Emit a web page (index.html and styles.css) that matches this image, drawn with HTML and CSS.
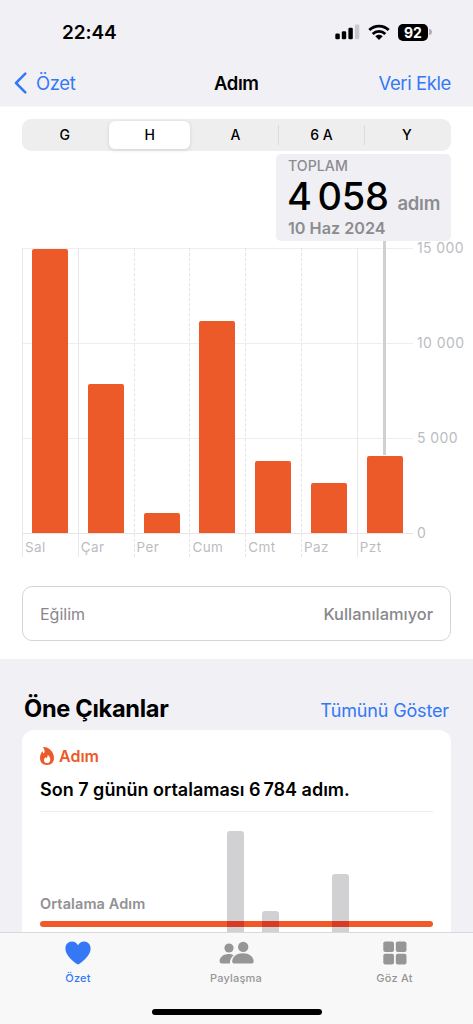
FILE: index.html
```html
<!DOCTYPE html>
<html lang="tr">
<head>
<meta charset="utf-8">
<meta name="viewport" content="width=device-width, initial-scale=1">
<title>Adım</title>
<link rel="stylesheet" href="styles.css">
</head>
<body>
<div class="screen">
  <header class="header">
    <div class="status">
      <span class="time">22:44</span>
      <div class="status-icons">
        <svg class="signal" width="25" height="16" viewBox="0 0 25 16"><rect x="0.3" y="9.6" width="4.5" height="5.7" rx="1.3"/><rect x="6.8" y="7.2" width="4.4" height="8.1" rx="1.3"/><rect x="13.4" y="3.7" width="4.4" height="11.6" rx="1.3"/><rect x="19.9" y="0.5" width="4.4" height="14.8" rx="1.3" fill="#c9c9cd"/></svg>
        <svg class="wifi" width="22" height="16" viewBox="0 0 22 16"><g fill="none" stroke="#000" stroke-width="2.8"><path d="M1.3 6.1C6.7.7 15.3.7 20.7 6.1"/><path d="M4.7 9.9C8.2 6.5 13.8 6.5 17.3 9.9"/></g><path d="M7.3 12.3C9.5 10.3 12.5 10.3 14.7 12.3L11 15.9Z"/></svg>
        <div class="battery"><span class="battery-level">92</span><span class="battery-tip"></span></div>
      </div>
    </div>
    <nav class="nav">
      <a class="back"><svg width="13" height="22" viewBox="0 0 13 22"><path d="M11.3 1.7 2 11l9.3 9.3" fill="none" stroke="#3478f6" stroke-width="2.5" stroke-linecap="round" stroke-linejoin="round"/></svg><span>Özet</span></a>
      <h1 class="title">Adım</h1>
      <a class="add"><span>Veri Ekle</span></a>
    </nav>
  </header>

  <main class="panel">
    <div class="segments">
      <span>G</span><span class="active">H</span><span>A</span><span class="divided">6 A</span><span class="divided">Y</span>
    </div>
    <section class="summary">
      <div class="callout">
        <span class="callout-kind">TOPLAM</span>
        <div class="callout-value"><span class="number">4 058</span><span class="unit">adım</span></div>
        <span class="callout-date">10 Haz 2024</span>
        <i class="callout-line"></i>
      </div>
    </section>
    <section class="chart">
      <div class="plot">
        <div class="day solid"><i style="height:284px"></i><span>Sal</span></div>
        <div class="day solid"><i style="height:149px"></i><span>Çar</span></div>
        <div class="day"><i style="height:20px"></i><span>Per</span></div>
        <div class="day"><i style="height:212px"></i><span>Cum</span></div>
        <div class="day"><i style="height:72px"></i><span>Cmt</span></div>
        <div class="day"><i style="height:50.5px"></i><span>Paz</span></div>
        <div class="day solid"><i style="height:77px"></i><span>Pzt</span></div>
      </div>
      <div class="scale"><span>15 000</span><span>10 000</span><span>5 000</span><span>0</span></div>
    </section>
    <div class="trend"><span class="trend-name">Eğilim</span><span class="trend-value">Kullanılamıyor</span></div>
  </main>

  <section class="highlights">
    <div class="section-head"><h2>Öne Çıkanlar</h2><a><span>Tümünü Göster</span></a></div>
    <article class="card">
      <div class="card-kind"><svg width="14" height="18" viewBox="0 0 14 18"><path fill="#eb5a28" fill-rule="evenodd" d="M3.7.1C8.7.1 14 5 14 11c0 4.300-2.800 7-7 7s-7-2.600-7-6.800C0 8.400.9 6.100 2 4.700c.3-.4.700-.2.800.2.200.8.500 1.300 1 1.700C5.100 5 4.600 2.400 3.300.8 3 .4 3.200.1 3.700.1ZM7.700 7.800c.2 1.800-.7 2.500-1.400 3.500-.5-.3-.7-.7-.8-1.200-.8.800-1.500 1.900-1.500 3.100 0 1.900 1.400 3 3.100 3s3.200-1.200 3.200-3.200c0-2.400-1.300-4.200-2.600-5.200Z"/></svg><span>Adım</span></div>
      <p class="card-text">Son 7 günün ortalaması 6&#8201;784 adım.</p>
      <div class="mini">
        <span class="mini-label">Ortalama Adım</span>
        <div class="mini-bars"><i style="height:102px"></i><i style="height:22px"></i><i class="empty"></i><i style="height:59px"></i></div>
        <div class="average"><i></i><i></i><i class="empty"></i><i></i></div>
      </div>
    </article>
  </section>

  <footer class="tabs">
    <div class="tab-list">
      <a class="tab current"><svg width="26" height="24" viewBox="0 0 26 24"><path d="M13 23.500C10 22 .4 15 .4 7.700.4 3.600 3.200.6 6.900.6c2.700 0 4.900 1.400 6.100 3.700C14.200 2 16.400.6 19.100.6c3.700 0 6.500 3 6.500 7.100C25.600 15 16 22 13 23.500Z"/></svg><span>Özet</span></a>
      <a class="tab"><svg width="35" height="24" viewBox="0 0 35 24"><circle cx="10" cy="7" r="4.6"/><path d="M.6 20c0-4.200 4.300-7 9-7 2 0 3.600.4 5.100 1.300-2.400 1.800-3.800 4.300-3.800 8.200H3C1.400 22.500.6 21.700.6 20Z"/><circle cx="24.2" cy="5.900" r="5.200"/><path d="M13.200 20.300c0-4.700 4.800-8.100 10.700-8.100s10.700 3.400 10.700 8.100c0 1.600-.8 2.300-2.500 2.300H15.700c-1.700 0-2.500-.7-2.500-2.300Z"/></svg><span>Paylaşma</span></a>
      <a class="tab"><svg width="24" height="24" viewBox="0 0 24 24"><rect x=".3" y=".4" width="10.7" height="10.7" rx="2"/><rect x="12.8" y=".4" width="10.7" height="10.7" rx="2"/><rect x=".3" y="12.8" width="10.7" height="10.7" rx="2"/><rect x="12.8" y="12.8" width="10.7" height="10.7" rx="2"/></svg><span>Göz At</span></a>
    </div>
    <div class="home-bar"></div>
  </footer>
</div>
</body>
</html>
```

FILE: styles.css
```css
* { box-sizing: border-box; }
body { margin: 0; background: #f0f0f5; font-family: Inter, "Liberation Sans", sans-serif; color: #000; }
h1, h2, p { margin: 0; }
span { white-space: nowrap; }
svg { display: block; flex: none; }
.screen { width: 473px; height: 1024px; overflow: hidden; display: flex; flex-direction: column; background: #f0f0f5; }

.header { height: 107px; flex: none; background: #f1f1f5; border-bottom: 1px solid #f8f8fa; }
.status { height: 60px; padding: 4px 41px 0 62px; display: flex; align-items: center; justify-content: space-between; }
.time { font-size: 19px; font-weight: 600; letter-spacing: -.1px; }
.status-icons { display: flex; align-items: center; gap: 8px; }
.battery { display: flex; align-items: center; gap: 1px; }
.battery-level { width: 30px; height: 17px; border-radius: 5px; background: #000; color: #fff; font-size: 14px; font-weight: 700; line-height: 17px; text-align: center; }
.battery-tip { width: 3px; height: 6px; border-radius: 0 3px 3px 0; background: #b0b0b5; }
.nav { height: 46px; padding: 0 22px 0 14px; display: grid; grid-template-columns: 200px 45px 1fr; align-items: center; color: #3478f6; font-size: 18.5px; letter-spacing: -.4px; }
.back { display: flex; align-items: center; gap: 9px; }
.title { color: #000; font-size: 18.5px; font-weight: 600; }
.add { text-align: right; }

.panel { height: 552px; flex: none; background: #fff; padding: 12px 22px 0; }
.segments { height: 32px; border-radius: 9px; background: #eee; display: grid; grid-template-columns: repeat(5, 1fr); align-items: center; text-align: center; font-size: 14px; font-weight: 500; padding-right: 2px; }
.segments span { line-height: 20px; }
.segments .active { margin: 0 3px 0 2px; height: 28px; line-height: 28px; border-radius: 6px; background: #fff; box-shadow: 0 1px 4px #0000001f; }
.segments .divided { border-left: 1px solid #dcdcde; }

.summary { height: 97px; padding-top: 3px; display: flex; justify-content: flex-end; }
.callout { position: relative; width: 175px; height: 87px; padding: 3px 11px 0 12px; border-radius: 5px; background: #f0f0f4; color: #8c8c90; display: flex; flex-direction: column; }
.callout-kind { font-size: 14.2px; font-weight: 500; line-height: 18px; }
.callout-value { display: flex; align-items: baseline; justify-content: space-between; line-height: 43px; height: 44px; }
.number { margin-left: -1px; font-size: 38px; font-weight: 500; letter-spacing: -.3px; word-spacing: -4px; color: #000; }
.unit { font-size: 18.5px; font-weight: 600; letter-spacing: -.3px; }
.callout-date { font-size: 16.2px; font-weight: 600; line-height: 19px; }
.callout-line { position: absolute; left: 107px; top: 87px; width: 3px; height: 214px; background: #d0d0d3; }

.chart { display: flex; height: 338px; }
.plot { width: 391px; height: 309px; flex: none; display: grid; grid-template-columns: repeat(7, 55.8px); background: linear-gradient(#eeeeef, #eeeeef) 0 0 / 391px 1px no-repeat, linear-gradient(#eeeeef, #eeeeef) 0 95px / 391px 1px no-repeat, linear-gradient(#eeeeef, #eeeeef) 0 190px / 391px 1px no-repeat, linear-gradient(#e8e4e4, #e8e4e4) 0 285px / 391px 1px no-repeat; }
.day { height: 309px; padding-bottom: 5px; display: flex; flex-direction: column; justify-content: flex-end; border-left: 1px dashed #e4e4e6; }
.day.solid { border-left-style: solid; border-left-color: #e8e8ea; }
.day i { width: 36px; margin-left: 9px; flex: none; border-radius: 2px 2px 0 0; background: #eb5a28; }
.day span { height: 19px; padding: 6px 0 0 2px; font-size: 13.5px; line-height: 17px; color: #bcbcbf; letter-spacing: .4px; }
.scale { padding-left: 4px; margin-top: -9px; color: #bcbcbf; font-size: 14px; letter-spacing: .4px; display: flex; flex-direction: column; gap: 77px; }
.scale span { line-height: 18px; }
.trend { height: 55px; padding: 0 17px; border: 1px solid #d4d4d6; border-radius: 10px; display: flex; align-items: center; justify-content: space-between; color: #88888b; font-size: 16px; }
.trend-value { font-size: 16.4px; font-weight: 500; }

.highlights { height: 273px; flex: none; padding: 32px 22px 0; overflow: hidden; }
.section-head { height: 39px; padding: 0 2px 3px; display: flex; align-items: center; justify-content: space-between; color: #3478f6; font-size: 18px; letter-spacing: -.15px; }
.section-head h2 { color: #000; font-size: 23.6px; line-height: 30px; font-weight: 700; letter-spacing: -.3px; }
.section-head a { padding-top: 2px; }
.card { height: 220px; border-radius: 12px; padding: 16px 18px 0; background: #fff; }
.card-kind { height: 19px; display: flex; align-items: center; gap: 5px; color: #eb5a28; font-size: 16px; font-weight: 600; }
.card-text { height: 47px; padding-top: 14px; border-bottom: 1px solid #ececef; font-size: 18px; line-height: 22px; font-weight: 600; white-space: nowrap; }
.mini { height: 125px; position: relative; display: flex; flex-direction: column; justify-content: flex-end; }
.mini-bars { position: absolute; left: 187px; bottom: 4px; display: grid; grid-template-columns: repeat(4, 17px); column-gap: 18px; align-items: end; }
.mini-bars i { border-radius: 3px 3px 0 0; background: #d1d1d4; }
.mini-label { color: #919194; font-size: 14.5px; line-height: 18px; font-weight: 600; letter-spacing: .1px; margin-bottom: 8px; }
.average { position: relative; height: 6px; margin-bottom: 10px; border-radius: 3px; background: #f05a29; display: grid; grid-template-columns: repeat(4, 17px); column-gap: 18px; padding-left: 187px; }
.average i { background: #d63b24; }
.average .empty { background: none; }

.tabs { height: 92px; flex: none; border-top: 1px solid #dadadd; background: #f8f8f8; }
.tab-list { height: 76px; display: grid; grid-template-columns: 156px 160px 1fr; }
.tab { display: flex; flex-direction: column; align-items: center; padding-top: 8px; gap: 6px; color: #969696; fill: #969696; font-size: 11px; line-height: 14px; font-weight: 500; letter-spacing: .2px; }
.tab.current { color: #3478f6; fill: #3478f6; }
.home-bar { width: 170px; height: 6px; margin: 0 auto; border-radius: 3px; background: #000; }
```
